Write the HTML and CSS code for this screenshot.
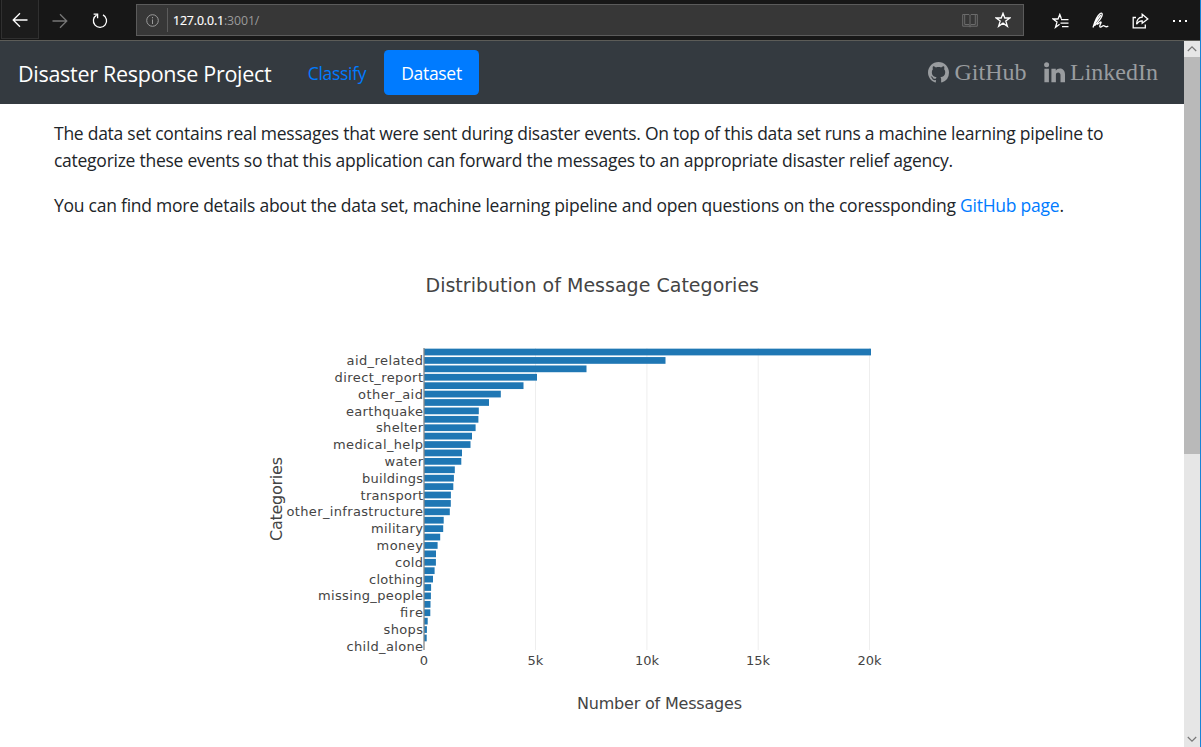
FILE: index.html
```html
<!DOCTYPE html>
<html lang="en">
<head>
<meta charset="utf-8">
<title>Disaster Response Project</title>
<link rel="stylesheet" href="styles.css">
</head>
<body>
<div class="window">
  <header class="toolbar">
    <span class="tool tool-back"><svg width="16" height="16" viewBox="0 0 16 16"><path d="M15.5 8H1M8 1.2L1.2 8L8 14.8"/></svg></span>
    <span class="tool tool-forward"><svg width="16" height="16" viewBox="0 0 16 16"><path d="M.5 8H15M8 1.2L14.8 8L8 14.8"/></svg></span>
    <span class="tool tool-reload"><svg width="16" height="16" viewBox="0 0 16 16"><path d="M11 1.9A6.6 6.6 0 1 1 4.6 2.1M1.6 1.2H5.6V5.2"/></svg></span>
    <div class="address">
      <svg class="info" width="13" height="13" viewBox="0 0 13 13"><circle cx="6.5" cy="6.5" r="5.8"/><path d="M6.5 5.5V10M6.5 3V4.3"/></svg>
      <span class="separator"></span>
      <span class="url"><b>127.0.0.1</b>:3001/</span>
      <svg class="book" width="16" height="15" viewBox="0 0 16 15"><path d="M.7 1.5H7L8 2.5L9 1.5H15.3V13.2H9L8 14.2L7 13.2H.7ZM8 2.5V14M2.7 1.5V11.5H7L8 12.5L9 11.5H13.3V1.5"/></svg>
      <svg class="star" width="16" height="16" viewBox="0 0 16 16"><path d="M8 1.3L9.8 6H14.8L10.8 9.1L12.4 14.3L8 11.1L3.6 14.3L5.2 9.1L1.2 6H6.2Z"/></svg>
    </div>
    <span class="tool action"><svg width="17" height="16" viewBox="0 0 17 16"><path d="M9.4 5.8L7.8 1.5L6 6H1L5 9.1L3.5 14.3L7.6 11.3M9 6.7H16.5M8.5 10.2H16.5M10 13.7H16.5"/></svg></span>
    <span class="tool action"><svg width="17" height="17" viewBox="0 0 17 17"><path d="M1 15.5C2.6 10 6 3 8.2 1.5C10 .4 10.8 2 9.8 4.2C8.6 7 6 10.3 2.4 13.8M2.4 12L8.8 3M5 12.5L8.7 10C10.3 9.7 6.4 14.6 8.2 15.1C9.8 15.5 10.7 13.1 12 13.8C13 14.7 14.4 15.3 16.3 14"/></svg></span>
    <span class="tool action"><svg width="17" height="16" viewBox="0 0 17 16"><path d="M4 4.5H1.2V14.8H13.3V11.5M10.2 1.3L15.8 6L10.2 10.3V7.8C7.6 7.6 6 8.8 4.6 11.3C4.7 7 6.6 4.3 10.2 4.1Z"/></svg></span>
    <span class="tool action"><svg class="dots" width="16" height="4" viewBox="0 0 16 4"><path d="M1 1h2v2H1zM7 1h2v2H7zM13 1h2v2h-2z"/></svg></span>
  </header>
  <div class="viewport">
    <main class="page">
      <nav class="navbar">
        <a class="brand">Disaster Response Project</a>
        <a class="nav-link">Classify</a>
        <a class="nav-link active">Dataset</a>
        <span class="spacer"></span>
        <a class="social"><svg width="21" height="21" viewBox="0 0 16 16"><path d="M8 0C3.58 0 0 3.58 0 8c0 3.54 2.29 6.53 5.47 7.59.4.07.55-.17.55-.38 0-.19-.01-.82-.01-1.49-2.01.37-2.53-.49-2.69-.94-.09-.23-.48-.94-.82-1.13-.28-.15-.68-.52-.01-.53.63-.01 1.08.58 1.23.82.72 1.21 1.87.87 2.33.66.07-.52.28-.87.51-1.07-1.78-.2-3.64-.89-3.64-3.95 0-.87.31-1.59.82-2.15-.08-.2-.36-1.02.08-2.12 0 0 .67-.21 2.2.82.64-.18 1.32-.27 2-.27.68 0 1.36.09 2 .27 1.53-1.04 2.2-.82 2.2-.82.44 1.1.16 1.92.08 2.12.51.56.82 1.27.82 2.15 0 3.07-1.87 3.75-3.65 3.95.29.25.54.73.54 1.48 0 1.07-.01 1.93-.01 2.2 0 .21.15.46.55.38A8.013 8.013 0 0016 8c0-4.42-3.58-8-8-8z"/></svg>GitHub</a>
        <a class="social linkedin"><svg width="21" height="21" viewBox="0 0 21 21"><circle cx="2.6" cy="2.7" r="2.5"/><path d="M.4 6.8h4.5v13.4H.4zM7.4 6.8h4.4v1.9c2.2-3.6 9.2-3 9.2 3.8v7.7h-4.5v-7.1c0-3.7-4.6-3.4-4.6-.3v7.4H7.4z"/></svg>LinkedIn</a>
      </nav>
      <section class="intro">
        <p>The data set contains real messages that were sent during disaster events. On top of this data set runs a machine learning pipeline to<br>categorize these events so that this application can forward the messages to an appropriate disaster relief agency.</p>
        <p class="details">You can find more details about the data set, machine learning pipeline and open questions on the coressponding <a class="link">GitHub page</a>.</p>
      </section>
      <svg class="chart" width="1184" height="510" viewBox="0 237 1184 510">
        <text class="chart-title" x="425.5" y="292" textLength="333.5">Distribution of Message Categories</text>
        <path class="grid" d="M535.5 348V650M646.9 348V650M758.2 348V650M869.5 348V650"/>
        <g class="bars">
          <rect x="424" y="348.65" width="447" height="6.75"/>
          <rect x="424" y="357.06" width="241.5" height="6.75"/>
          <rect x="424" y="365.47" width="162.5" height="6.75"/>
          <rect x="424" y="373.88" width="113" height="6.75"/>
          <rect x="424" y="382.29" width="99.5" height="6.75"/>
          <rect x="424" y="390.7" width="76.8" height="6.75"/>
          <rect x="424" y="399.11" width="65" height="6.75"/>
          <rect x="424" y="407.52" width="54.8" height="6.75"/>
          <rect x="424" y="415.93" width="54.4" height="6.75"/>
          <rect x="424" y="424.34" width="51.6" height="6.75"/>
          <rect x="424" y="432.75" width="48" height="6.75"/>
          <rect x="424" y="441.16" width="46.5" height="6.75"/>
          <rect x="424" y="449.57" width="38" height="6.75"/>
          <rect x="424" y="457.98" width="37.3" height="6.75"/>
          <rect x="424" y="466.39" width="30.8" height="6.75"/>
          <rect x="424" y="474.8" width="29.9" height="6.75"/>
          <rect x="424" y="483.21" width="29.3" height="6.75"/>
          <rect x="424" y="491.62" width="26.9" height="6.75"/>
          <rect x="424" y="500.03" width="26.8" height="6.75"/>
          <rect x="424" y="508.44" width="25.8" height="6.75"/>
          <rect x="424" y="516.85" width="19.7" height="6.75"/>
          <rect x="424" y="525.26" width="19.2" height="6.75"/>
          <rect x="424" y="533.67" width="16.2" height="6.75"/>
          <rect x="424" y="542.08" width="13.6" height="6.75"/>
          <rect x="424" y="550.49" width="12" height="6.75"/>
          <rect x="424" y="558.9" width="11.9" height="6.75"/>
          <rect x="424" y="567.31" width="10.6" height="6.75"/>
          <rect x="424" y="575.72" width="9" height="6.75"/>
          <rect x="424" y="584.13" width="7.1" height="6.75"/>
          <rect x="424" y="592.54" width="6.9" height="6.75"/>
          <rect x="424" y="600.95" width="6.5" height="6.75"/>
          <rect x="424" y="609.36" width="6.3" height="6.75"/>
          <rect x="424" y="617.77" width="3.7" height="6.75"/>
          <rect x="424" y="626.18" width="2.9" height="6.75"/>
          <rect x="424" y="634.59" width="2.7" height="6.75"/>
        </g>
        <path class="axis" d="M424 348V650"/>
        <g class="ticks y-ticks">
          <text x="423" y="365" textLength="76.5">aid_related</text>
          <text x="423" y="382" textLength="88.5">direct_report</text>
          <text x="423" y="399" textLength="65">other_aid</text>
          <text x="423" y="416" textLength="77">earthquake</text>
          <text x="423" y="432" textLength="47">shelter</text>
          <text x="423" y="449" textLength="90">medical_help</text>
          <text x="423" y="466" textLength="38.5">water</text>
          <text x="423" y="483" textLength="61">buildings</text>
          <text x="423" y="500" textLength="62.5">transport</text>
          <text x="423" y="516" textLength="136.5">other_infrastructure</text>
          <text x="423" y="533" textLength="52">military</text>
          <text x="423" y="550" textLength="46.5">money</text>
          <text x="423" y="567" textLength="28">cold</text>
          <text x="423" y="584" textLength="54">clothing</text>
          <text x="423" y="600" textLength="105">missing_people</text>
          <text x="423" y="617" textLength="23">fire</text>
          <text x="423" y="634" textLength="39.5">shops</text>
          <text x="423" y="651" textLength="76.5">child_alone</text>
        </g>
        <g class="ticks x-ticks">
          <text x="424" y="665">0</text>
          <text x="535.5" y="665">5k</text>
          <text x="647" y="665">10k</text>
          <text x="758" y="665">15k</text>
          <text x="869.5" y="665">20k</text>
        </g>
        <text class="axis-title" x="577" y="709" textLength="165">Number of Messages</text>
        <text class="axis-title" transform="translate(282 541) rotate(-90)" textLength="84">Categories</text>
      </svg>
    </main>
    <aside class="scrollbar">
      <span class="arrow"><svg width="10" height="6" viewBox="0 0 10 6"><path d="M.8 5L5 .9L9.2 5"/></svg></span>
      <span class="thumb"></span>
      <span class="track"></span>
      <span class="arrow"><svg width="10" height="6" viewBox="0 0 10 6"><path d="M.8 1L5 5.1L9.2 1"/></svg></span>
    </aside>
  </div>
</div>
</body>
</html>
```
FILE: styles.css
```css
* { box-sizing: border-box; }
body { margin: 0; background: #fff; font-family: "Open Sans", "Noto Sans", sans-serif; }
.window { width: 1201px; height: 747px; overflow: hidden; display: flex; flex-direction: column; border-right: 1px solid #1883d7; }
svg { flex: none; }

.toolbar { height: 41px; flex: none; display: flex; align-items: flex-start; background: #171717; border-bottom: 1px solid #5c5c58; }
.tool { width: 40px; height: 39px; display: flex; align-items: center; justify-content: center; padding-top: 2px; }
.tool svg, .address svg { fill: none; stroke: #fff; stroke-width: 1.3; }
.tool-back { width: 38px; margin-left: 1px; border: 1px solid #303030; border-top: 0; background: #1c1c1c; }
.tool-forward { width: 42px; }
.tool-forward svg { stroke: #777; }
.tool-reload { width: 38px; margin-right: 17px; }
.tool svg.dots { fill: #fff; stroke: none; }
.address { width: 888px; height: 32px; margin: 4px 16px 0 0; display: flex; align-items: center; background: #373737; border: 1px solid #5b5b5b; }
.address .info { margin-left: 9px; stroke: #9b9b9b; stroke-width: 1; }
.separator { width: 1px; height: 24px; margin: 0 5px 0 8px; background: #5c5c5c; }
.url { flex: 1; font-size: 12.3px; letter-spacing: -.1px; color: #9a9a9a; }
.url b { font-weight: 400; color: #fff; -webkit-text-stroke: .2px #fff; }
.address .book { stroke: #6c6c6c; stroke-width: 1; margin-right: 17px; }
.address .star { margin-right: 12px; }

.viewport { flex: 1; min-height: 0; display: flex; }
.page { width: 1184px; overflow: hidden; background: #fff; }
.navbar { height: 63px; display: flex; align-items: center; padding: 0 26px 1px 18px; background: #343a40; }
.brand { width: 272px; padding-top: 2px; color: #fff; font-size: 21.5px; letter-spacing: -.28px; white-space: nowrap; }
.nav-link { width: 94px; height: 45px; padding-top: 2px; display: flex; align-items: center; justify-content: center; border-radius: 4.5px; color: #007bff; font-size: 17.5px; letter-spacing: -.3px; }
.nav-link.active { width: 95px; color: #fff; background: #007bff; }
.spacer { flex: 1; }
.social { display: flex; align-items: center; gap: 5.5px; padding-top: 1px; font: 24px "Liberation Serif", serif; color: #999c9f; }
.social svg { fill: #999c9f; }
.linkedin { margin-left: 17px; }

.intro { padding: 16px 54px 0; height: 133px; font-size: 17.5px; line-height: 27px; letter-spacing: -.262px; color: #212529; white-space: nowrap; }
.intro p { margin: 0 0 18px; }
.intro .details { letter-spacing: -.243px; }
.link { color: #007bff; }

.chart { display: block; fill: #444; font-family: "DejaVu Sans", sans-serif; }
.chart-title { font-size: 19px; }
.axis-title { font-size: 16px; }
.ticks { font-size: 13px; }
.y-ticks { text-anchor: end; }
.x-ticks { text-anchor: middle; }
.bars { fill: #1f77b4; }
.grid { stroke: #eee; stroke-width: 1; }
.axis { stroke: #888; stroke-width: 1.3; }

.scrollbar { width: 16px; display: flex; flex-direction: column; background: #e6e6e6; }
.arrow { height: 16px; display: flex; align-items: center; justify-content: center; }
.arrow svg { fill: none; stroke: #777; stroke-width: 1.2; }
.thumb { height: 397px; background: #b9b9b9; }
.track { flex: 1; }
```
